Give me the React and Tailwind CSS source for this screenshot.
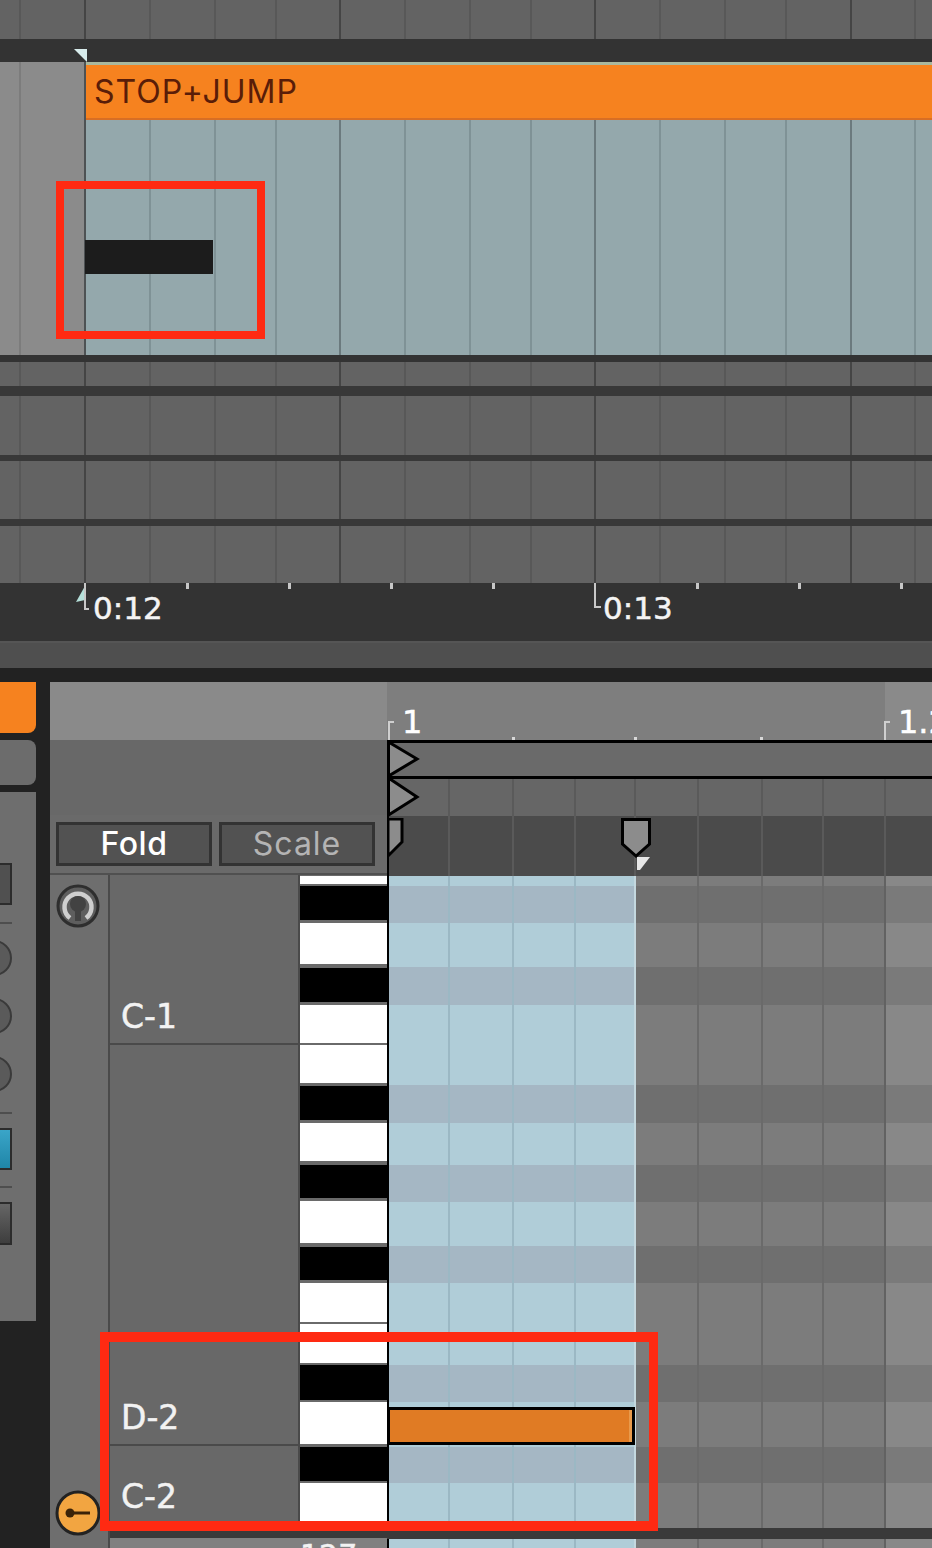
const FONT = "font-['Inter','Liberation_Sans',sans-serif]";
const DIGITS = "font-['DejaVu_Sans','Liberation_Sans',sans-serif] [-webkit-text-stroke:0.5px_currentColor]";

// arrangement grid columns, bar lines are darker
const TOP_COLS = [
  { w: "w-[21px]" },
  { w: "w-[65px]", bar: true },
  { w: "w-[65px]" },
  { w: "w-[65px]" },
  { w: "w-[61px]" },
  { w: "w-[64px]", bar: true },
  { w: "w-[65px]" },
  { w: "w-[65px]" },
  { w: "w-[61px]" },
  { w: "w-[64px]", bar: true },
  { w: "w-[65px]" },
  { w: "w-[65px]" },
  { w: "w-[61px]" },
  { w: "w-[65px]", bar: true },
  { w: "w-[64px]" },
  { w: "flex-1" },
];

const MIDI_COLS = [
  { w: "w-[61px]", light: "bg-[#b0cdd8]", dark: "bg-[#a5b7c4]", line: "border-[#9bb8c4]" },
  { w: "w-[64px]", light: "bg-[#b0cdd8]", dark: "bg-[#a5b7c4]", line: "border-[#9bb8c4]" },
  { w: "w-[62px]", light: "bg-[#b0cdd8]", dark: "bg-[#a5b7c4]", line: "border-[#9bb8c4]" },
  { w: "w-[60px]", light: "bg-[#b0cdd8]", dark: "bg-[#a5b7c4]", line: "border-[#c4d8df]" },
  { w: "w-[63px]", light: "bg-[#7c7c7c]", dark: "bg-[#6f6f6f]", line: "border-[#6a6a6a]" },
  { w: "w-[64px]", light: "bg-[#7c7c7c]", dark: "bg-[#6f6f6f]", line: "border-[#6a6a6a]" },
  { w: "w-[61px]", light: "bg-[#7c7c7c]", dark: "bg-[#6f6f6f]", line: "border-[#6a6a6a]" },
  { w: "w-[62px]", light: "bg-[#7c7c7c]", dark: "bg-[#6f6f6f]", line: "border-[#626262]" },
  { w: "flex-1", light: "bg-[#888888]", dark: "bg-[#7a7a7a]", line: "border-transparent" },
];

const MIDI_ROWS = [
  { h: "h-[10px]", kind: "light" },
  { h: "h-[37px]", kind: "dark" },
  { h: "h-[44px]", kind: "light" },
  { h: "h-[38px]", kind: "dark" },
  { h: "h-[80px]", kind: "light" },
  { h: "h-[38px]", kind: "dark" },
  { h: "h-[42px]", kind: "light" },
  { h: "h-[37px]", kind: "dark" },
  { h: "h-[44px]", kind: "light" },
  { h: "h-[37px]", kind: "dark" },
  { h: "h-[82px]", kind: "light" },
  { h: "h-[37px]", kind: "dark" },
  { h: "h-[45px]", kind: "light" },
  { h: "h-[36px]", kind: "dark" },
  { h: "h-[45px]", kind: "light" },
];

const PIANO_KEYS = [
  "mt-px h-[8px] bg-white",
  "mt-[2px] h-[34px] bg-black",
  "mt-[3px] h-[41px] bg-white",
  "mt-[4px] h-[34px] bg-black",
  "mt-[3px] h-[38px] bg-white",
  "mt-[2px] h-[38px] bg-white",
  "mt-[3px] h-[34px] bg-black",
  "mt-[3px] h-[38px] bg-white",
  "mt-[4px] h-[33px] bg-black",
  "mt-[3px] h-[42px] bg-white",
  "mt-[4px] h-[33px] bg-black",
  "mt-[3px] h-[39px] bg-white",
  "mt-[2px] h-[39px] bg-white",
  "mt-[2px] h-[35px] bg-black",
  "mt-[2px] h-[42px] bg-white",
  "mt-[3px] h-[34px] bg-black",
  "mt-[2px] h-[42px] bg-white",
];

const RULER_TICKS = ["left-[186px]", "left-[288px]", "left-[390px]", "left-[492px]", "left-[696px]", "left-[798px]", "left-[900px]"];
const BEAT_TICKS = ["left-[125px]", "left-[247px]", "left-[373px]"];

const TrackRow = ({ height, bg = "bg-[#636363]", line = "border-[#585858]", bar = "border-[#454545]", cols = TOP_COLS }) => (
  <div className={`flex ${height} ${bg}`}>
    {cols.map((col, i) => (
      <div key={i} className={`${col.w} h-full border-r-2 ${i === cols.length - 1 ? "border-transparent" : col.bar ? bar : line}`} />
    ))}
  </div>
);

const MidiCells = ({ kind }) => (
  <>
    {MIDI_COLS.map((col, i) => (
      <div key={i} className={`${col.w} h-full border-r-2 ${col.line} ${kind === "light" ? col.light : col.dark}`} />
    ))}
  </>
);

const HeadCells = ({ bg }) => (
  <div className={`flex h-full ${bg}`}>
    {MIDI_COLS.map((col, i) => (
      <div key={i} className={`${col.w} h-full border-r-2 ${i === 8 ? "border-transparent" : "border-[#5a5a5a]"}`} />
    ))}
  </div>
);

const KeyLabel = ({ box, children }) => (
  <div className={`flex shrink-0 items-end pl-[11px] ${box}`}>
    <span className={`text-[33px] leading-none text-[#f2f2f2] ${DIGITS}`}>{children}</span>
  </div>
);

const Arrangement = () => (
  <div className="relative">
    <TrackRow height="h-[39px]" />
    <div className="relative h-[23px] bg-[#333333]">
      <svg className="absolute left-[74px] top-[10px]" width="14" height="13" viewBox="0 0 14 13">
        <path d="M0 0H13V13Z" fill="#d8ecec" />
      </svg>
    </div>
    <div className="flex h-[293px]">
      <div className="flex w-[86px] bg-[#8b8b8b]">
        <div className="w-[21px] border-r-2 border-[#7c7c7c]" />
        <div className="flex-1 border-r-2 border-[#4e5254]" />
      </div>
      <div className="flex flex-1 flex-col">
        <div className="h-[3px] bg-[#a9b89e]" />
        <div className="flex h-[55px] items-center border-b-2 border-[#d86e24] bg-[#f6821f] pl-[8px]">
          <span className="text-[32px] leading-none tracking-[1px] text-[#5a1d08]">STOP+JUMP</span>
        </div>
        <div className="relative h-[235px] bg-[#94a8ac]">
          <TrackRow
            height="h-full"
            bg="bg-[#94a8ac]"
            line="border-[#7f9296]"
            bar="border-[#6b7a7e]"
            cols={TOP_COLS.slice(2)}
          />
          <div className="absolute -left-px top-[120px] h-[34px] w-[128px] bg-[#1c1c1c]" />
        </div>
      </div>
    </div>
    <div className="h-[7px] bg-[#333333]" />
    <TrackRow height="h-[24px]" />
    <div className="h-[10px] bg-[#383838]" />
    <TrackRow height="h-[59px]" />
    <div className="h-[6px] bg-[#383838]" />
    <TrackRow height="h-[58px]" />
    <div className="h-[7px] bg-[#383838]" />
    <TrackRow height="h-[57px]" />

    {/* time ruler */}
    <div className={`relative flex h-[58px] bg-[#333333] text-[31px] leading-none text-[#f4f4f4] ${DIGITS}`}>
      <div className="w-[85px]" />
      <div className="w-[510px] pl-[8px] pt-[10px]">0:12</div>
      <div className="flex-1 pl-[8px] pt-[10px]">0:13</div>
      {RULER_TICKS.map((left) => (
        <div key={left} className={`absolute top-0 h-[6px] w-[3px] bg-[#c8c8c8] ${left}`} />
      ))}
      <svg className="absolute left-[74px] top-0" width="16" height="30" viewBox="0 0 16 30">
        <path d="M11 3V17L2 19Z" fill="#b5e0da" />
        <path d="M11 0V26H15" fill="none" stroke="#c8c8c8" strokeWidth="2" />
      </svg>
      <svg className="absolute left-[590px] top-0" width="12" height="28" viewBox="0 0 12 28">
        <path d="M5 0V24H11" fill="none" stroke="#c8c8c8" strokeWidth="2" />
      </svg>
    </div>
    <div className="h-[27px] border-t-2 border-[#555555] bg-[#4f4f4f]" />
    <div className="h-[14px] bg-[#222222]" />
  </div>
);

const LeftRail = () => (
  <div className="w-[50px] bg-[#222222]">
    <div className="h-[51px] w-[36px] rounded-br-[8px] bg-[#f6821f]" />
    <div className="mt-[7px] h-[45px] w-[36px] rounded-r-[8px] bg-[#6c6c6c]" />
    <div className="mt-[7px] h-[529px] w-[36px] overflow-hidden bg-[#6e6e6e]">
      <div className="mt-[71px] h-[42px] w-[12px] border-2 border-l-0 border-[#2c2c2c] bg-[#505050]" />
      <div className="mt-[17px] h-[2px] w-[12px] bg-[#4e4e4e]" />
      <div className="-ml-[24px] mt-[16px] h-[36px] w-[36px] rounded-full border-2 border-[#3a3a3a] bg-[#5a5a5a]" />
      <div className="-ml-[24px] mt-[22px] h-[36px] w-[36px] rounded-full border-2 border-[#3a3a3a] bg-[#5a5a5a]" />
      <div className="-ml-[24px] mt-[22px] h-[36px] w-[36px] rounded-full border-2 border-[#3a3a3a] bg-[#5a5a5a]" />
      <div className="mt-[20px] h-[2px] w-[12px] bg-[#4e4e4e]" />
      <div className="mt-[14px] h-[42px] w-[12px] border-2 border-l-0 border-[#2c2c2c] bg-linear-to-b from-[#3aa5c8] to-[#1f86a8]" />
      <div className="mt-[16px] h-[2px] w-[12px] bg-[#4e4e4e]" />
      <div className="mt-[14px] h-[43px] w-[12px] border-2 border-l-0 border-[#2c2c2c] bg-linear-to-b from-[#666666] to-[#3e3e3e]" />
    </div>
  </div>
);

const KeySide = () => (
  <div className="flex w-[337px] flex-col">
    <div className="h-[58px] shrink-0 bg-[#8a8a8a]" />
    <div className="h-[75px] shrink-0 bg-[#686868]" />
    <div className="flex h-[60px] shrink-0 gap-[7px] border-b-2 border-[#505050] bg-[#6a6a6a] pl-[6px] pt-[7px]">
      <div className="flex h-[44px] w-[156px] items-center justify-center border-[3px] border-[#333333] bg-[#525252] text-[32px] font-medium leading-none tracking-[0.5px] text-white">
        Fold
      </div>
      <div className="flex h-[44px] w-[156px] items-center justify-center border-[3px] border-[#333333] bg-[#525252] text-[32px] leading-none tracking-[1px] text-[#b4b4b4]">
        Scale
      </div>
    </div>
    <div className="flex min-h-0 flex-1">
      {/* sidebar with preview and key buttons */}
      <div className="flex w-[60px] flex-col justify-between border-r-2 border-[#4a4a4a] bg-[#6e6e6e] pb-[12px] pl-[5px] pt-[8px]">
        <svg width="46" height="46" viewBox="0 0 46 46">
          <circle cx="23" cy="23" r="20" fill="#5e5e5e" stroke="#2e2e2e" strokeWidth="3" />
          <path d="M15 35A13.5 13.5 0 1 1 31 35" fill="none" stroke="#cfcfcf" strokeWidth="4.5" />
          <circle cx="23" cy="21" r="8" fill="#424242" />
          <path d="M20 24H26V38H20Z" fill="#424242" />
        </svg>
        <svg width="46" height="46" viewBox="0 0 46 46">
          <circle cx="23" cy="23" r="21" fill="#f2a541" stroke="#222222" strokeWidth="3" />
          <circle cx="15" cy="23" r="4.5" fill="#3a2208" />
          <path d="M15 23H35" stroke="#3a2208" strokeWidth="3" />
        </svg>
      </div>
      <div className="flex min-h-0 flex-1 flex-col">
        <div className="flex h-[652px] shrink-0">
          <div className="flex w-[190px] flex-col border-r-2 border-[#4a4a4a] bg-[#686868]">
            <KeyLabel box="h-[170px] pb-[10px] border-b-2 border-[#4a4a4a]">C-1</KeyLabel>
            <KeyLabel box="h-[401px] pb-[10px] border-b-2 border-[#4a4a4a]">D-2</KeyLabel>
            <KeyLabel box="h-[81px] pb-[14px]">C-2</KeyLabel>
          </div>
          <div className="flex-1 bg-[#6a6a6a]">
            {PIANO_KEYS.map((key, i) => (
              <div key={i} className={key} />
            ))}
          </div>
        </div>
        <div className="h-[11px] shrink-0 bg-[#3a3a3a]" />
        <div className="min-h-0 flex-1 overflow-hidden bg-[#808080] pl-[190px]">
          <div className={`mt-[3px] text-[30px] leading-none text-[#f2f2f2] ${DIGITS}`}>127</div>
        </div>
      </div>
    </div>
  </div>
);

const MidiGrid = () => (
  <div className="relative flex-1 overflow-hidden">
    {/* beat ruler */}
    <div className={`relative flex h-[58px] text-[32px] leading-none text-white ${DIGITS}`}>
      <div className="w-[498px] shrink-0 bg-[#7e7e7e] pl-[15px] pt-[24px]">1</div>
      <div className="min-w-0 flex-1 overflow-hidden whitespace-nowrap bg-[#8a8a8a] pl-[13px] pt-[24px]">1.2</div>
      {BEAT_TICKS.map((left) => (
        <div key={left} className={`absolute bottom-0 h-[3px] w-[3px] bg-[#d8d8d8] ${left}`} />
      ))}
      <svg className="absolute left-0 top-[38px]" width="8" height="20" viewBox="0 0 8 20">
        <path d="M2 20V2H7" fill="none" stroke="#cfcfcf" strokeWidth="2" />
      </svg>
      <svg className="absolute left-[496px] top-[38px]" width="8" height="20" viewBox="0 0 8 20">
        <path d="M2 20V2H7" fill="none" stroke="#cfcfcf" strokeWidth="2" />
      </svg>
    </div>
    <div className="h-[3px] bg-black" />
    <div className="h-[33px] bg-[#6a6a6a]" />
    <div className="h-[3px] bg-black" />
    <div className="h-[37px] border-l-2 border-black">
      <HeadCells bg="bg-[#666666]" />
    </div>
    <div className="h-[60px] border-l-2 border-black">
      <HeadCells bg="bg-[#4b4b4b]" />
    </div>

    <div className="relative h-[652px]">
      {MIDI_ROWS.map((row, i) => (
        <div key={i} className={`flex ${row.h} border-l-2 border-black`}>
          <MidiCells kind={row.kind} />
        </div>
      ))}
      <div className="absolute left-0 top-[531px] flex h-[38px] w-[248px] justify-end border-[3px] border-black bg-[#e07b24]">
        <div className="w-[3px] bg-[#e89a4c]" />
      </div>
    </div>
    <div className="h-[11px] bg-[#3a3a3a]" />
    <div className="flex h-[10px] border-l-2 border-black">
      <MidiCells kind="light" />
    </div>

    {/* loop and clip markers on top of the header rows */}
    <svg className="absolute left-0 top-[58px]" width="36" height="78" viewBox="0 0 36 78">
      <path d="M1.5 2L30 19L1.5 36Z" fill="#8c8c8c" stroke="#000" strokeWidth="3" />
      <path d="M1.5 38L30 57L1.5 75Z" fill="#8c8c8c" stroke="#000" strokeWidth="3" />
    </svg>
    <svg className="absolute left-0 top-[136px]" width="18" height="42" viewBox="0 0 18 42">
      <path d="M1 1H15V24L1 38Z" fill="#8c8c8c" stroke="#000" strokeWidth="3" />
    </svg>
    <svg className="absolute left-[233px] top-[135px]" width="32" height="54" viewBox="0 0 32 54">
      <path d="M2.5 2.5H29.5V27L16 39L2.5 27Z" fill="#8c8c8c" stroke="#000" strokeWidth="3" />
      <path d="M17 40H30L20 53H17Z" fill="#e8e8e8" />
    </svg>
  </div>
);

export default function App() {
  return (
    <div className={`relative h-[1548px] w-[932px] overflow-hidden bg-[#222222] ${FONT}`}>
      <Arrangement />
      <div className="flex h-[866px]">
        <LeftRail />
        <KeySide />
        <MidiGrid />
      </div>
      {/* red annotation boxes */}
      <div className="absolute left-[56px] top-[181px] h-[158px] w-[209px] border-[8px] border-[#ff2a12]" />
      <div className="absolute left-[100px] top-[1332px] h-[199px] w-[558px] border-x-[9px] border-y-[10px] border-[#ff2a12]" />
    </div>
  );
}
